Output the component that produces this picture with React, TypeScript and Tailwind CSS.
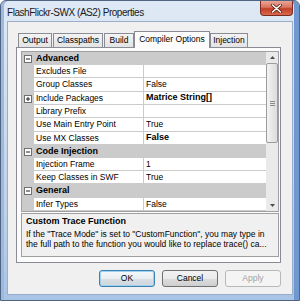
import React from "react";

type Row = {
  cat?: string;
  label?: string;
  value?: string;
  bold?: boolean;
  plus?: boolean;
  h: string;
};

const rows: Row[] = [
  { cat: "Advanced", h: "h-[13px]" },
  { label: "Excludes File", value: "", h: "h-[13px]" },
  { label: "Group Classes", value: "False", h: "h-[14px]" },
  { label: "Include Packages", value: "Matrice String[]", bold: true, plus: true, h: "h-[13px]" },
  { label: "Library Prefix", value: "", h: "h-[13px]" },
  { label: "Use Main Entry Point", value: "True", h: "h-[14px]" },
  { label: "Use MX Classes", value: "False", bold: true, h: "h-[13px]" },
  { cat: "Code Injection", h: "h-[13px]" },
  { label: "Injection Frame", value: "1", h: "h-[13px]" },
  { label: "Keep Classes in SWF", value: "True", h: "h-[13px]" },
  { cat: "General", h: "h-[14px]" },
  { label: "Infer Types", value: "False", h: "h-[13px]" },
];

const tabs = [
  { name: "Output", w: "w-[34px]", gap: "ml-0" },
  { name: "Classpaths", w: "w-[50px]", gap: "ml-[1px]" },
  { name: "Build", w: "w-[30px]", gap: "ml-[1px]" },
  { name: "Compiler Options", w: "w-[76px]", gap: "ml-0", active: true },
  { name: "Injection", w: "w-[38px]", gap: "ml-0" },
];

const ExpandBox = ({plus}: {plus?: boolean}) => (
  <svg width="8" height="8" viewBox="0 0 8 8" className="shrink-0">
    <rect x="0.5" y="0.5" width="7" height="7" fill="#fdfdfd" stroke="#6f6f6f" />
    <line x1="2" y1="4" x2="6" y2="4" stroke="#222" />
    {plus && <line x1="4" y1="2" x2="4" y2="6" stroke="#222" />}
  </svg>
);

const ScrollBar = () => (
  <div className="flex w-[12px] shrink-0 flex-col bg-[#eaeaea]">
    <div className="flex h-[11px] items-center justify-center">
      <svg width="5" height="3" viewBox="0 0 5 3">
        <path d="M0 3 L2.5 0 L5 3 Z" fill="#4d4d4d" />
      </svg>
    </div>
    <div className="flex h-[80px] flex-col items-center justify-center gap-[1px] rounded-[2px] border border-[#9c9c9c] bg-[linear-gradient(90deg,#f3f3f3,#dcdcdc)]">
      <div className="h-px w-[5px] bg-[#8a8a8a]" />
      <div className="h-px w-[5px] bg-[#8a8a8a]" />
      <div className="h-px w-[5px] bg-[#8a8a8a]" />
    </div>
    <div className="flex-1" />
    <div className="flex h-[11px] items-center justify-center">
      <svg width="5" height="3" viewBox="0 0 5 3">
        <path d="M0 0 L2.5 3 L5 0 Z" fill="#4d4d4d" />
      </svg>
    </div>
  </div>
);

const Button = ({label, primary, disabled}: {label: string; primary?: boolean; disabled?: boolean}) => (
  <div
    className={
      "flex h-[17px] w-[56px] items-center justify-center rounded-[3px] border text-[8.5px] " +
      (disabled
        ? "border-[#b5b9bc] bg-[#f4f4f4] text-[#a3a3a3]"
        : primary
          ? "border-[#3c7fb1] bg-[linear-gradient(180deg,#f4f8fb_0%,#e9eef2_50%,#d9dfe4_51%,#ced6dc_100%)] text-black shadow-[inset_0_0_0_1px_#9fd2f0]"
          : "border-[#707070] bg-[linear-gradient(180deg,#f2f2f2_0%,#ebebeb_50%,#dddddd_51%,#cfcfcf_100%)] text-black")
    }
  >
    {label}
  </div>
);

export default function App() {
  return (
    <div className="flex h-[301px] w-[300px] flex-col overflow-hidden rounded-t-[6px] border border-[#4e6480] bg-[linear-gradient(180deg,#dfe9f5_0%,#d2dfee_30%,#bcd0e8_75%,#a9c3e5_100%)] font-['Liberation_Sans',Arial,sans-serif] shadow-[inset_3px_0_0_#9db9df,inset_-5px_0_0_#6f98d2]">
      <div className="flex h-[20px] shrink-0 items-start">
        <div className="pl-[6px] pt-[4px] text-[10px] tracking-[-0.45px] text-[#1a1a1a]">
          FlashFlickr-SWX (AS2) Properties
        </div>
        <div className="ml-auto mr-[6px] flex h-[15px] w-[33px] items-center justify-center rounded-b-[4px] border border-t-0 border-[#7b2b1f] bg-[linear-gradient(180deg,#eaa596_0%,#d9735f_45%,#c13f26_55%,#d86a4f_100%)]">
          <svg width="11" height="9" viewBox="0 0 11 9">
            <path d="M1.5 1 L9.5 8 M9.5 1 L1.5 8" stroke="#5a1e14" strokeWidth="3" strokeLinecap="round" />
            <path d="M1.5 1 L9.5 8 M9.5 1 L1.5 8" stroke="#ffffff" strokeWidth="1.6" strokeLinecap="round" />
          </svg>
        </div>
      </div>

      <div className="mx-[6px] mb-[5px] flex flex-1 flex-col border border-[#9aaecb] bg-[#f0f0f0] pl-[8px] pr-[11px] pt-[9px]">
        <div className="flex h-[16px] items-end pl-[2px] text-[8.5px]">
          {tabs.map((t) =>
            t.active ? (
              <div
                key={t.name}
                className={`${t.w} ${t.gap} relative z-10 -mb-px flex h-[17px] items-center justify-center border border-b-0 border-[#898c95] bg-[#fcfcfc] pb-[1px]`}
              >
                {t.name}
              </div>
            ) : (
              <div
                key={t.name}
                className={`${t.w} ${t.gap} flex h-[14px] items-center justify-center border border-b-0 border-[#898c95] bg-[linear-gradient(180deg,#f3f3f3,#e3e3e3)]`}
              >
                {t.name}
              </div>
            ),
          )}
        </div>

        <div className="flex h-[216px] w-[265px] flex-col border border-[#898c95] bg-[#fcfcfc] pl-[4px] pr-[1px] pt-[3px]">
          <div className="flex h-[161px] border border-[#a0a0a0] bg-white">
            <div className="flex flex-1 flex-col">
              {rows.map((r, i) =>
                r.cat ? (
                  <div key={i} className={`${r.h} flex items-center bg-[#cbcbcb]`}>
                    <div className="flex w-[12px] justify-center">
                      <ExpandBox />
                    </div>
                    <span className="pl-[2px] text-[9px] font-bold">{r.cat}</span>
                  </div>
                ) : (
                  <div key={i} className={`${r.h} flex`}>
                    <div className="flex w-[12px] items-center justify-center bg-[#cbcbcb]">
                      {r.plus && <ExpandBox plus />}
                    </div>
                    <div className="flex w-[110px] items-center border-b border-r border-[#cbcbcb] pl-[2px] text-[8.5px]">
                      {r.label}
                    </div>
                    <div
                      className={
                        "flex flex-1 items-center border-b border-[#cbcbcb] pl-[2px] " +
                        (r.bold ? "text-[9px] font-bold" : "text-[8.5px]")
                      }
                    >
                      {r.value}
                    </div>
                  </div>
                ),
              )}
            </div>
            <ScrollBar />
          </div>

          <div className="mt-[1px] h-[44px] border border-[#a0a0a0] bg-[#f0f0f0] px-[4px] pt-[2px]">
            <div className="text-[9px] font-bold leading-[11px]">Custom Trace Function</div>
            <div className="mt-[2px] text-[8.5px] leading-[10px]">
              If the "Trace Mode" is set to "CustomFunction", you may type in
              <br />
              the full path to the function you would like to replace trace() ca...
            </div>
          </div>
        </div>

        <div className="mt-[7px] flex justify-end gap-[7px] pr-[-1px]">
          <Button label="OK" primary />
          <Button label="Cancel" />
          <Button label="Apply" disabled />
        </div>
      </div>
    </div>
  );
}
